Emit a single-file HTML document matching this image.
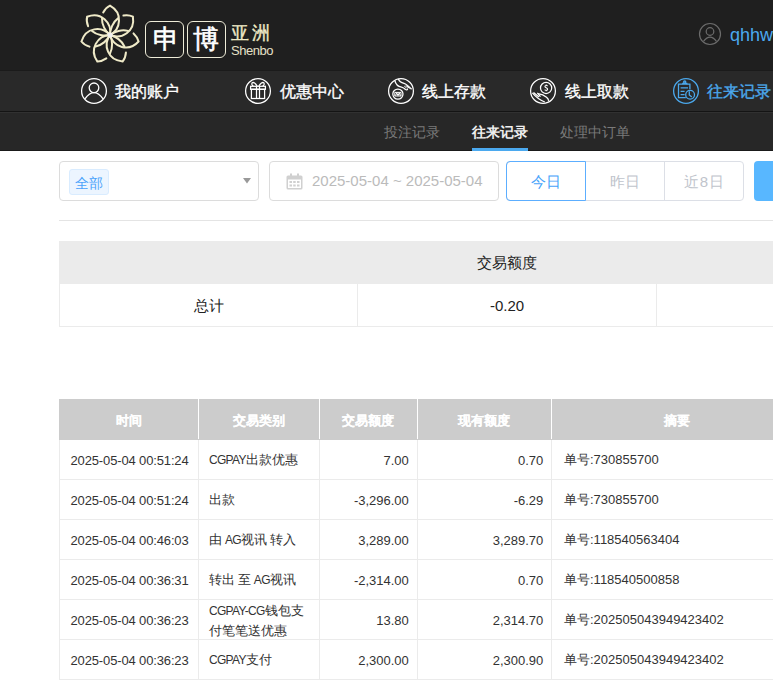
<!DOCTYPE html>
<html><head><meta charset="utf-8">
<style>
*{margin:0;padding:0;box-sizing:border-box}
html,body{width:773px;height:681px;overflow:hidden;background:#fff;font-family:"Liberation Sans",sans-serif}
.a{position:absolute;white-space:nowrap}
#top{position:absolute;left:0;top:0;width:773px;height:71px;background:#1f1f1f;border-bottom:1px solid #1b1b1b}
#nav{position:absolute;left:0;top:71px;width:773px;height:41px;background:#292929;border-bottom:1px solid #141414}
#sub{position:absolute;left:0;top:112px;width:773px;height:39px;background:#272727;border-top:1px solid #313131;border-bottom:1px solid #1a1a1a}
.nt{font-size:16px;color:#fff;line-height:20px;top:81.5px;-webkit-text-stroke:0.35px currentColor}
.st{font-size:14px;color:#7a7a7a;line-height:18px;top:123px}
.box{position:absolute;border:1px solid #dcdcdc;border-radius:4px;background:#fff}
.tb{position:absolute;left:59px;width:714px}
td,th{white-space:nowrap}
.rowb{position:absolute;left:59px;width:714px;height:1px;background:#ebebeb}
.vl{position:absolute;width:1px;background:#ebebeb}
.c{font-size:13px;color:#333;line-height:16px}
.th{top:400px;height:40px;line-height:41px;text-align:center;color:#fff;font-weight:bold;font-size:13px;-webkit-text-stroke:0.1px #fff}
.n{font-size:13px}
.L{letter-spacing:-0.7px;font-size:12px}
.S{letter-spacing:-0.7px}
</style></head><body>
<div id="top"></div>
<div id="nav"></div>
<div id="sub"></div>

<!-- logo flower -->
<svg class="a" style="left:78px;top:3px" width="64" height="64" viewBox="-32 -32 64 64">
<g fill="none" stroke="#efeac8" stroke-width="2" stroke-linecap="round" stroke-linejoin="miter">
<g id="arm"><path d="M0,0 C11,-6 13,-22 0,-29.3 Q-4,-27.5 -6.8,-22.6"/><path d="M0,0 C0,-6 3,-13 8,-16.6"/></g>
<use href="#arm" transform="rotate(51.429)"/>
<use href="#arm" transform="rotate(102.857)"/>
<use href="#arm" transform="rotate(154.286)"/>
<use href="#arm" transform="rotate(205.714)"/>
<use href="#arm" transform="rotate(257.143)"/>
<use href="#arm" transform="rotate(308.571)"/>
</g>
<circle cx="0" cy="0" r="2.5" fill="#f0f0f0"/>
</svg>
<div class="a" style="left:145px;top:21px;width:39px;height:37px;border:1.5px solid #eeecd8;border-radius:6px"></div>
<div class="a" style="left:187px;top:21px;width:39px;height:37px;border:1.5px solid #eeecd8;border-radius:6px"></div>
<div class="a" style="left:152.5px;top:22.5px;font-size:26px;line-height:32px;color:#fff;-webkit-text-stroke:0.6px #fff">申</div>
<div class="a" style="left:193px;top:23px;font-size:26px;line-height:32px;color:#fff;-webkit-text-stroke:0.6px #fff">博</div>
<div class="a" style="left:231px;top:22px;font-size:18px;line-height:22px;color:#efe9c6;letter-spacing:3px;-webkit-text-stroke:0.35px #efe9c6">亚洲</div>
<div class="a" style="left:231px;top:42.5px;font-size:13px;line-height:16px;color:#e6e1c8;letter-spacing:-0.45px">Shenbo</div>

<!-- user -->
<svg class="a" style="left:698px;top:22px" width="24" height="24" viewBox="0 0 24 24">
<g fill="none" stroke="#6c6c6c" stroke-width="1.2">
<circle cx="12" cy="12" r="10.5"/>
<circle cx="12" cy="9.5" r="3.8"/>
<path d="M5.5,19.3 Q12,11 18.5,19.3"/>
</g></svg>
<div class="a" style="left:730px;top:24px;font-size:18px;line-height:22px;color:#4ba9ef">qhhw1</div>

<!-- nav icons -->
<svg class="a" style="left:80px;top:77px" width="28" height="28" viewBox="0 0 28 28">
<g fill="none" stroke="#fff" stroke-width="1.3">
<circle cx="14" cy="14" r="12.4"/>
<circle cx="14" cy="10.8" r="4.8"/>
<path d="M5,21.9 Q14,9.5 23,21.9"/>
</g></svg>
<div class="a nt" style="left:115px">我的账户</div>

<svg class="a" style="left:244px;top:77px" width="28" height="28" viewBox="0 0 28 28">
<g fill="none" stroke="#fff" stroke-width="1.25">
<circle cx="14" cy="14" r="12.4"/>
<rect x="6.6" y="9.3" width="14.8" height="3"/>
<rect x="7.4" y="12.3" width="13.2" height="9.2"/>
<path d="M12.5,9.3 V21.5 M15.5,9.3 V21.5"/>
<path d="M13.2,9.2 C11.5,6.5 9.5,4.8 8.3,5.8 C7.3,6.8 8,8.6 9.5,9.2 M14.8,9.2 C16.5,6.5 18.5,4.8 19.7,5.8 C20.7,6.8 20,8.6 18.5,9.2"/>
</g></svg>
<div class="a nt" style="left:280px">优惠中心</div>

<svg class="a" style="left:387px;top:77px" width="28" height="28" viewBox="0 0 28 28">
<g fill="none" stroke="#fff" stroke-width="1.25">
<circle cx="14" cy="14" r="12.4"/>
<circle cx="10.9" cy="17.1" r="5.1"/>
<path d="M7.8,15.4 H14 V19 H7.8 Z M8.6,18.6 L9.8,16 L11,18.6 L12.2,16 L13.3,18.6" stroke-width="1"/>
<path d="M7.8,3.5 C8.5,6.5 11,9.5 14.5,10.2 C16.5,10.7 17.5,11.5 18.5,12.5 C19.8,13.3 21,12.6 20.3,11.5"/>
<path d="M11.4,2 C12.3,4.5 14.5,5.7 17,6.3 C19.5,7 22,9.5 24.6,12.2"/>
<path d="M17.3,9.2 L19.5,10.8 M18.6,8.3 L21.3,10.7 M19.8,8.7 L22.5,11.5" stroke-width="1"/>
</g></svg>
<div class="a nt" style="left:422px">线上存款</div>

<svg class="a" style="left:529px;top:77px" width="28" height="28" viewBox="0 0 28 28">
<g fill="none" stroke="#fff" stroke-width="1.25">
<circle cx="14" cy="14" r="12.4"/>
<circle cx="17.1" cy="10.9" r="5.6"/>
<path d="M18.6,9.2 C18.3,8.3 15.9,8.3 15.9,9.6 C15.9,10.9 18.6,10.7 18.6,12.2 C18.6,13.6 16.1,13.6 15.7,12.6 M17.2,7.6 V8.3 M17.2,13.5 V14.3" stroke-width="1.1"/>
<path d="M3.4,15.8 C6,19 10,22.5 15.8,25"/>
<path d="M9.2,16.6 C12,17 15.5,18.5 17.5,20.2 C18.8,21.3 19.5,22.5 19.7,23.8"/>
<path d="M4.5,15.5 L10,20 M8.3,15.8 L11.5,19.7"/>
</g></svg>
<div class="a nt" style="left:565px">线上取款</div>

<svg class="a" style="left:672px;top:77px" width="28" height="28" viewBox="0 0 28 28">
<g fill="none" stroke="#4ba8ec" stroke-width="1.3">
<circle cx="14" cy="14" r="12.4"/>
<path d="M13.8,20.6 H6.5 V7.2 H17.9 V12.3"/>
<path d="M10.8,7.2 V6.4 H14.8 V7.2"/>
<circle cx="12.7" cy="5.1" r="1.1"/>
<path d="M8.6,10.9 H16 M8.6,14.3 H12.6 M8.6,17.6 H12.6"/>
<circle cx="18.1" cy="17.8" r="4.4"/>
<path d="M17.3,14.3 V18 L19.8,20"/>
</g></svg>
<div class="a nt" style="left:707px;color:#4ba8ec">往来记录</div>

<!-- submenu -->
<div class="a st" style="left:384px">投注记录</div>
<div class="a st" style="left:472px;color:#eee;font-weight:bold">往来记录</div>
<div class="a" style="left:472px;top:148px;width:56px;height:3px;background:#4ba9ef"></div>
<div class="a st" style="left:560px">处理中订单</div>

<!-- filters -->
<div class="box" style="left:59px;top:161px;width:200px;height:40px"></div>
<div class="a" style="left:69px;top:169px;width:40px;height:26px;background:#ecf5ff;border:1px solid #d9ecff;border-radius:3px;color:#4aa3fb;font-size:14px;line-height:27.5px;padding-left:5px">全部</div>
<svg class="a" style="left:242px;top:177px" width="10" height="8" viewBox="0 0 10 8"><path d="M1,1 H9 L5,6.5 Z" fill="#999"/></svg>

<div class="box" style="left:269px;top:161px;width:230px;height:40px"></div>
<svg class="a" style="left:286px;top:173px" width="17" height="17" viewBox="0 0 17 17">
<g fill="#d0d0d0"><rect x="0.5" y="2.5" width="16" height="14" rx="1.5"/></g>
<g fill="#fff"><rect x="2" y="6.5" width="13" height="8.5"/></g>
<g fill="#d0d0d0"><rect x="4" y="0.5" width="2" height="4"/><rect x="11" y="0.5" width="2" height="4"/>
<rect x="3.5" y="8" width="2.5" height="2"/><rect x="7.2" y="8" width="2.5" height="2"/><rect x="11" y="8" width="2.5" height="2"/>
<rect x="3.5" y="11.5" width="2.5" height="2"/><rect x="7.2" y="11.5" width="2.5" height="2"/><rect x="11" y="11.5" width="2.5" height="2"/></g>
</svg>
<div class="a" style="left:312px;top:172px;font-size:15px;line-height:18px;color:#bbb">2025-05-04 ~ 2025-05-04</div>

<div class="a" style="left:506px;top:161px;width:238px;height:40px;border:1px solid #dcdfe6;border-radius:4px"></div>
<div class="a" style="left:664px;top:161px;width:1px;height:40px;background:#dcdfe6"></div>
<div class="a" style="left:506px;top:161px;width:80px;height:40px;border:1px solid #5caeff;border-radius:4px 0 0 4px"></div>
<div class="a" style="left:531px;top:173px;font-size:15px;line-height:18px;color:#47a3fa">今日</div>
<div class="a" style="left:609.5px;top:173px;font-size:15px;line-height:18px;color:#c0c4cc">昨日</div>
<div class="a" style="left:684px;top:173px;font-size:15px;line-height:18px;color:#c0c4cc;letter-spacing:0.8px">近8日</div>
<div class="a" style="left:754px;top:161px;width:30px;height:40px;background:#58b7ff;border-radius:4px"></div>

<div class="a" style="left:59px;top:220px;width:714px;height:1px;background:#e4e4e4"></div>

<!-- summary -->
<div class="a" style="left:59px;top:241px;width:714px;height:43px;background:#ebebeb"></div>
<div class="a" style="left:477px;top:254px;font-size:15px;line-height:18px;color:#222">交易额度</div>
<div class="vl" style="left:59px;top:284px;height:43px"></div>
<div class="vl" style="left:357px;top:284px;height:43px"></div>
<div class="vl" style="left:656px;top:284px;height:43px"></div>
<div class="rowb" style="top:326px"></div>
<div class="a" style="left:194px;top:297px;font-size:15px;line-height:18px;color:#222">总计</div>
<div class="a" style="left:490px;top:297px;font-size:15px;line-height:18px;color:#222">-0.20</div>

<!-- main table -->
<div class="a" style="left:59px;top:399px;width:714px;height:41px;background:#cccccc"></div>
<div id="rows">
<div class="a th" style="left:59px;width:139px">时间</div>
<div class="a th" style="left:198px;width:121px">交易类别</div>
<div class="a th" style="left:319px;width:98px">交易额度</div>
<div class="a th" style="left:417px;width:134px">现有额度</div>
<div class="a th" style="left:551px;width:252px">摘要</div>
<div class="a" style="left:198px;top:399px;width:1px;height:40px;background:#fff"></div>
<div class="a" style="left:319px;top:399px;width:1px;height:40px;background:#fff"></div>
<div class="a" style="left:417px;top:399px;width:1px;height:40px;background:#fff"></div>
<div class="a" style="left:551px;top:399px;width:1px;height:40px;background:#fff"></div>
<div class="vl" style="left:59px;top:440px;height:240px"></div>
<div class="vl" style="left:198px;top:440px;height:240px"></div>
<div class="vl" style="left:319px;top:440px;height:240px"></div>
<div class="vl" style="left:417px;top:440px;height:240px"></div>
<div class="vl" style="left:551px;top:440px;height:240px"></div>
<div class="rowb" style="top:479px"></div>
<div class="a c" style="left:209px;top:452px"><span class=L>CGPAY</span>出款优惠</div>
<div class="a c n" style="left:70.5px;top:452.5px;letter-spacing:-0.14px">2025-05-04 00:51:24</div>
<div class="a c n" style="right:364.2px;top:452.5px">7.00</div>
<div class="a c n" style="right:229.70000000000005px;top:452.5px">0.70</div>
<div class="a c n" style="left:564px;top:452px">单号:730855700</div>
<div class="rowb" style="top:519px"></div>
<div class="a c" style="left:209px;top:492px">出款</div>
<div class="a c n" style="left:70.5px;top:492.5px;letter-spacing:-0.14px">2025-05-04 00:51:24</div>
<div class="a c n" style="right:364.2px;top:492.5px">-3,296.00</div>
<div class="a c n" style="right:229.70000000000005px;top:492.5px">-6.29</div>
<div class="a c n" style="left:564px;top:492px">单号:730855700</div>
<div class="rowb" style="top:559px"></div>
<div class="a c" style="left:209px;top:532px">由<span class=S> </span><span class=L>AG</span>视讯<span class=S> </span>转入</div>
<div class="a c n" style="left:70.5px;top:532.5px;letter-spacing:-0.14px">2025-05-04 00:46:03</div>
<div class="a c n" style="right:364.2px;top:532.5px">3,289.00</div>
<div class="a c n" style="right:229.70000000000005px;top:532.5px">3,289.70</div>
<div class="a c n" style="left:564px;top:532px">单号:118540563404</div>
<div class="rowb" style="top:599px"></div>
<div class="a c" style="left:209px;top:572px">转出<span class=S> </span>至<span class=S> </span><span class=L>AG</span>视讯</div>
<div class="a c n" style="left:70.5px;top:572.5px;letter-spacing:-0.14px">2025-05-04 00:36:31</div>
<div class="a c n" style="right:364.2px;top:572.5px">-2,314.00</div>
<div class="a c n" style="right:229.70000000000005px;top:572.5px">0.70</div>
<div class="a c n" style="left:564px;top:572px">单号:118540500858</div>
<div class="rowb" style="top:639px"></div>
<div class="a c" style="left:209px;top:601px;line-height:19px"><span class=L>CGPAY-CG</span>钱包支<br>付笔笔送优惠</div>
<div class="a c n" style="left:70.5px;top:612.5px;letter-spacing:-0.14px">2025-05-04 00:36:23</div>
<div class="a c n" style="right:364.2px;top:612.5px">13.80</div>
<div class="a c n" style="right:229.70000000000005px;top:612.5px">2,314.70</div>
<div class="a c n" style="left:564px;top:612px">单号:202505043949423402</div>
<div class="rowb" style="top:679px"></div>
<div class="a c" style="left:209px;top:652px"><span class=L>CGPAY</span>支付</div>
<div class="a c n" style="left:70.5px;top:652.5px;letter-spacing:-0.14px">2025-05-04 00:36:23</div>
<div class="a c n" style="right:364.2px;top:652.5px">2,300.00</div>
<div class="a c n" style="right:229.70000000000005px;top:652.5px">2,300.90</div>
<div class="a c n" style="left:564px;top:652px">单号:202505043949423402</div>
</div>
</body></html>
